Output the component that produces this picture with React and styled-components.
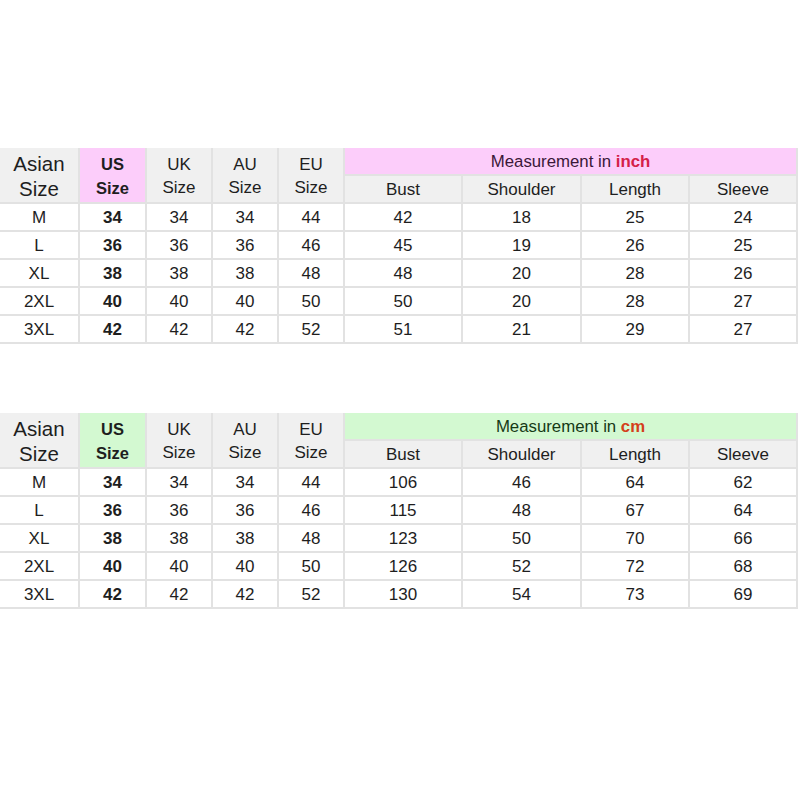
import React from "react";
import styled, { createGlobalStyle } from "styled-components";

const Global = createGlobalStyle`
  html, body { margin: 0; padding: 0; background: #ffffff; }
  body { font-family: "Liberation Sans", Arial, sans-serif; color: #1e1e1e; }
`;

const Page = styled.div`
  width: 800px;
  padding-top: 148px;
  display: flex;
  flex-direction: column;
  gap: 69px;
`;

const Grid = styled.div`
  display: grid;
  grid-template-columns: 80px 67px 66px 66px 66px 118px 119px 108px 108px;
  grid-auto-rows: 28px;
  width: 798px;
`;

const Cell = styled.div`
  box-sizing: border-box;
  display: flex;
  align-items: center;
  justify-content: center;
  text-align: center;
  border-right: 2px solid #e2e2e2;
  border-bottom: 2px solid #e2e2e2;
  background: ${(p) => p.$bg || "#ffffff"};
  font-size: ${(p) => p.$size || 17}px;
  font-weight: ${(p) => (p.$bold ? 700 : 400)};
  color: ${(p) => p.$color || "#1e1e1e"};
  line-height: ${(p) => p.$lh || 1.2};
  ${(p) => p.$rows && `grid-row: span ${p.$rows};`}
  ${(p) => p.$cols && `grid-column: span ${p.$cols};`}
  padding-top: 3px;
`;

const Unit = styled.span`
  color: ${(p) => p.$color};
  font-weight: 700;
`;

const sizes = ["M", "L", "XL", "2XL", "3XL"];
const us = [34, 36, 38, 40, 42];
const eu = [44, 46, 48, 50, 52];

const tables = [
  {
    accent: "#fccdfa",
    titleColor: "#3a1838",
    unit: "inch",
    unitColor: "#d42048",
    data: [
      [42, 18, 25, 24],
      [45, 19, 26, 25],
      [48, 20, 28, 26],
      [50, 20, 28, 27],
      [51, 21, 29, 27],
    ],
  },
  {
    accent: "#d3f9d1",
    titleColor: "#163a16",
    unit: "cm",
    unitColor: "#d4401a",
    data: [
      [106, 46, 64, 62],
      [115, 48, 67, 64],
      [123, 50, 70, 66],
      [126, 52, 72, 68],
      [130, 54, 73, 69],
    ],
  },
];

const HEAD = "#f0f0f0";

function SizeTable({ t }) {
  return (
    <Grid>
      <Cell $rows={2} $bg={HEAD} $size={20.5} $lh={1.2}>
        Asian
        <br />
        Size
      </Cell>
      <Cell $rows={2} $bg={t.accent} $size={16.5} $bold $lh={1.45}>
        US
        <br />
        Size
      </Cell>
      {["UK", "AU", "EU"].map((c) => (
        <Cell key={c} $rows={2} $bg={HEAD} $size={17} $lh={1.35}>
          {c}
          <br />
          Size
        </Cell>
      ))}
      <Cell $cols={4} $bg={t.accent} $size={16.8} $color={t.titleColor}>
        Measurement in&nbsp;<Unit $color={t.unitColor}>{t.unit}</Unit>
      </Cell>
      {["Bust", "Shoulder", "Length", "Sleeve"].map((h) => (
        <Cell key={h} $bg={HEAD}>
          {h}
        </Cell>
      ))}
      {sizes.map((s, i) => (
        <React.Fragment key={s}>
          <Cell>{s}</Cell>
          <Cell $bold>{us[i]}</Cell>
          <Cell>{us[i]}</Cell>
          <Cell>{us[i]}</Cell>
          <Cell>{eu[i]}</Cell>
          {t.data[i].map((v, j) => (
            <Cell key={j}>{v}</Cell>
          ))}
        </React.Fragment>
      ))}
    </Grid>
  );
}

export default function App() {
  return (
    <>
      <Global />
      <Page>
        {tables.map((t) => (
          <SizeTable key={t.unit} t={t} />
        ))}
      </Page>
    </>
  );
}
